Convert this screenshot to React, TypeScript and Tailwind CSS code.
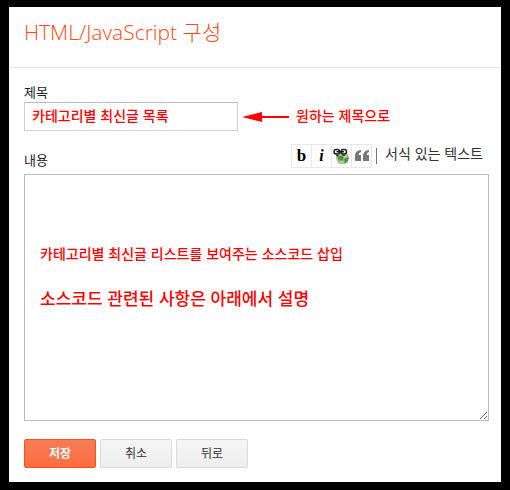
const tools = [
  { name: "굵게", icon: <BoldIcon /> },
  { name: "기울임꼴", icon: <ItalicIcon /> },
  { name: "링크", icon: <LinkIcon /> },
  { name: "인용문", icon: <QuoteIcon /> },
]

function BoldIcon() {
  return <b className="font-['Liberation_Serif',serif] text-[17px] leading-5 text-black">b</b>
}

function ItalicIcon() {
  return <b className="font-['Liberation_Serif',serif] text-base italic leading-5 text-black">i</b>
}

function LinkIcon() {
  return (
    <svg width="17" height="17" viewBox="0 0 17 17" className="shrink-0">
      <circle cx="9.500" cy="10" r="6.300" fill="#98c47c" />
      <path d="M4 8h6l1 2-2 3-3-1zM11 11l4.500-2-.5 4-3 2.500z" fill="#5f8650" />
      <path d="m10 7 4 1-3 2zM7 14l2-1.500 1 2.500z" fill="#c9e4b2" />
      <g fill="#fff" stroke="#1c1c1c">
        <rect x="1" y="1.500" width="5.500" height="4.500" rx="2.200" strokeWidth="1.500" />
        <rect x="8" y="1.500" width="5.500" height="4.500" rx="2.200" strokeWidth="1.500" />
        <path d="M3.500 3.700h7.500" strokeWidth="1.500" />
      </g>
      <path d="M3 7.500h2.500M9.500 7.500H12" stroke="#333" strokeWidth="1" />
    </svg>
  )
}

function QuoteIcon() {
  return (
    <svg width="14" height="12" viewBox="0 0 14 12" fill="#777" className="shrink-0">
      <path d="M6 0v2C4.300 2.300 3.800 3.500 3.800 5H6v6H0V6C0 2.700 2.200.300 6 0z" />
      <path d="M14 0v2c-1.700.300-2.200 1.500-2.200 3H14v6H8V6c0-3.300 2.200-5.700 6-6z" />
    </svg>
  )
}

function Arrow() {
  return (
    <svg width="47" height="12" viewBox="0 0 47 12" fill="#ff0000" className="shrink-0">
      <path d="M0 6 20 1v4h27v2H20v4z" />
    </svg>
  )
}

export default function App() {
  return (
    <div className="min-h-screen bg-black pt-[7px] pr-[9px] pb-2 pl-[9px] font-['Liberation_Sans','Noto_Sans_CJK_KR',sans-serif] text-[#222]">
      <main className="bg-[#fefefe] pb-[14px]">
        {/* Header */}
        <header className="h-[61px] border-b border-[#e6e6e6] px-[15px] pt-[11px]">
          <h1 className="font-['Open_Sans','Noto_Sans_CJK_KR',sans-serif] text-[21px] font-light leading-7 text-[#ff4a12]">
            HTML/JavaScript 구성
          </h1>
        </header>

        <form className="pr-3 pl-[15px] pt-4" onSubmit={(e) => e.preventDefault()}>
          {/* Title */}
          <label htmlFor="title" className="block text-[13px] leading-[18px]">
            제목
          </label>
          <div className="flex items-center">
            <input
              id="title"
              type="text"
              defaultValue="카테고리별 최신글 목록"
              className="h-[29px] w-[214px] border border-[#d0d0d0] border-t-[#bbb] bg-white px-[7px] pb-1 text-sm font-medium text-[#ff0000] outline-none"
            />
            <div className="ml-1 flex items-center gap-[7px] text-sm font-medium text-[#ff0000]">
              <Arrow />
              <span className="pb-0.5">원하는 제목으로</span>
            </div>
          </div>

          {/* Content */}
          <div className="mt-[13px] flex items-start justify-between">
            <label htmlFor="content" className="pt-2 text-[13px] leading-[18px]">
              내용
            </label>
            <div className="flex items-center pr-1.5">
              <div className="flex border-l border-[#e8e8e8]">
                {tools.map((tool) => (
                  <button
                    key={tool.name}
                    type="button"
                    aria-label={tool.name}
                    className="flex h-6 w-5 items-center justify-center border-y border-r border-[#e8e8e8] bg-white"
                  >
                    {tool.icon}
                  </button>
                ))}
              </div>
              <span className="ml-1 h-4 w-px bg-[#777]" />
              <button type="button" className="ml-2 pb-1 text-sm leading-5 text-[#333]">
                서식 있는 텍스트
              </button>
            </div>
          </div>
          <div className="relative mt-1">
            <textarea
              id="content"
              className="block h-[247px] w-full resize border border-[#bbb] bg-white outline-none"
            />
            <div className="pointer-events-none absolute left-4 top-[70px] font-medium text-[#ff0000]">
              <p className="text-sm leading-5">카테고리별 최신글 리스트를 보여주는 소스코드 삽입</p>
              <p className="mt-6 text-[17px] leading-6">소스코드 관련된 사항은 아래에서 설명</p>
            </div>
          </div>

          {/* Actions */}
          <div className="mt-[18px] flex gap-1 text-xs">
            <button
              type="submit"
              className="h-[29px] w-[72px] rounded-xs border border-[#f4511e] bg-linear-to-b from-[#f67c56] to-[#ff6c40] font-bold text-white"
            >
              저장
            </button>
            <button
              type="button"
              className="h-[29px] w-[72px] rounded-xs border border-[#d8d8d8] bg-linear-to-b from-[#f5f5f5] to-[#eee] text-[#333]"
            >
              취소
            </button>
            <button
              type="button"
              className="h-[29px] w-[72px] rounded-xs border border-[#d8d8d8] bg-linear-to-b from-[#f5f5f5] to-[#eee] text-[#333]"
            >
              뒤로
            </button>
          </div>
        </form>
      </main>
    </div>
  )
}
